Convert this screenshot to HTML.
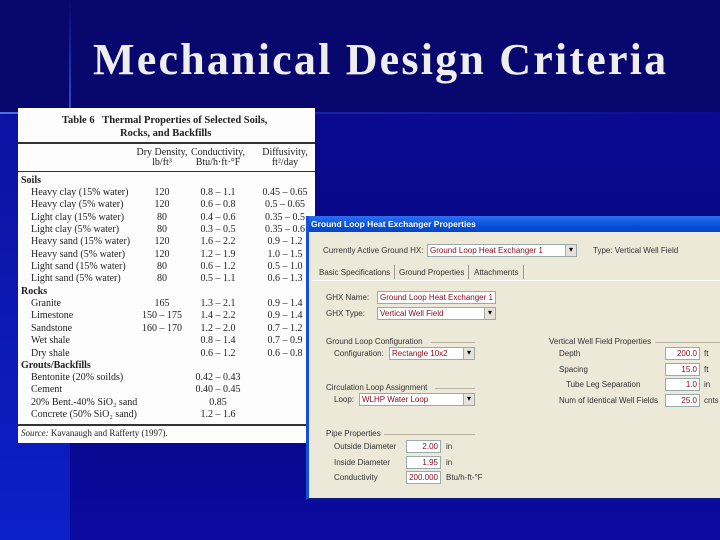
<!DOCTYPE html>
<html><head><meta charset="utf-8"><style>
*{margin:0;padding:0;box-sizing:border-box}
body{width:720px;height:540px;overflow:hidden;position:relative;background:#07076e;font-family:"Liberation Sans",sans-serif}
.a{position:absolute;white-space:nowrap}
#low{left:0;top:113px;width:720px;height:427px;background:linear-gradient(180deg,#0a0a92 0%,#06067e 50%,#0a0aa0 100%)}
#lstrip{left:0;top:113px;width:70px;height:427px;background:linear-gradient(180deg,#0c12a0,#0c20c8)}
#vl{left:69px;top:0;width:2px;height:113px;background:linear-gradient(180deg,#07076e,#3050d0)}
#hl{left:0;top:112px;width:720px;height:2px;background:linear-gradient(90deg,#5070e0,#1a2aa8 30%,#0c0c90)}
h1{position:absolute;left:93px;top:34px;font:700 44px "Liberation Serif",serif;color:#eeeeee;letter-spacing:2.2px}
#tbl{left:18px;top:108px;width:297px;height:335px;background:#fdfdfd;font-family:"Liberation Serif",serif;color:#222;font-size:10px}
#tbl .a{line-height:11px}
.c1{left:13px}.c2{width:60px;left:114px;text-align:center}.c3{width:80px;left:160px;text-align:center}.c4{width:60px;left:237px;text-align:center}
.rule{position:absolute;left:0;width:297px;height:1px;background:#333}
#win{left:306px;top:216px;width:414px;height:284px;background:#ece9d8;border-left:3px solid #1450d8;border-bottom:2px solid #0a1a80}
#tb{left:0;top:0;width:414px;height:16px;background:linear-gradient(180deg,#2a70f0,#0850d8 60%,#0844c0);color:#fff;font-weight:bold;font-size:8.5px;padding:3px 0 0 2px}
#win .t{font-size:8px;color:#333}
.in{position:absolute;background:#fff;border:1px solid #9aa;color:#8a1020;font-size:8px;padding:1px 2px;height:13px}
.cb:after{content:"▾";position:absolute;right:0;top:0;width:10px;height:11px;background:#e4e2da;border-left:1px solid #aaa;color:#000;font-size:8px;text-align:center}
.gl{position:absolute;height:1px;background:#b8b4a0}
.num{text-align:right}
</style></head><body>
<div class="a" id="low"></div><div class="a" id="lstrip"></div><div class="a" id="vl"></div><div class="a" id="hl"></div>
<h1>Mechanical Design Criteria</h1>
<div class="a" id="tbl">
<div class="a" style="left:44px;top:7px;font-weight:bold;font-size:10.5px">Table 6&nbsp;&nbsp; Thermal Properties of Selected Soils,</div>
<div class="a" style="left:102px;top:20px;font-weight:bold;font-size:10.5px">Rocks, and Backfills</div>
<div class="rule" style="top:34px;height:2px"></div>
<div class="a c2" style="top:39px">Dry Density,</div><div class="a c2" style="top:49px">lb/ft³</div>
<div class="a c3" style="top:39px">Conductivity,</div><div class="a c3" style="top:49px">Btu/h·ft·°F</div>
<div class="a c4" style="top:39px">Diffusivity,</div><div class="a c4" style="top:49px">ft²/day</div>
<div class="rule" style="top:63px"></div>
<div class="a" style="left:3px;top:67px;font-weight:bold">Soils</div>
<div class="a c1" style="top:79px">Heavy clay (15% water)</div><div class="a c2" style="top:79px">120</div><div class="a c3" style="top:79px">0.8 – 1.1</div><div class="a c4" style="top:79px">0.45 – 0.65</div>
<div class="a c1" style="top:91px">Heavy clay (5% water)</div><div class="a c2" style="top:91px">120</div><div class="a c3" style="top:91px">0.6 – 0.8</div><div class="a c4" style="top:91px">0.5 – 0.65</div>
<div class="a c1" style="top:104px">Light clay (15% water)</div><div class="a c2" style="top:104px">80</div><div class="a c3" style="top:104px">0.4 – 0.6</div><div class="a c4" style="top:104px">0.35 – 0.5</div>
<div class="a c1" style="top:116px">Light clay (5% water)</div><div class="a c2" style="top:116px">80</div><div class="a c3" style="top:116px">0.3 – 0.5</div><div class="a c4" style="top:116px">0.35 – 0.6</div>
<div class="a c1" style="top:128px">Heavy sand (15% water)</div><div class="a c2" style="top:128px">120</div><div class="a c3" style="top:128px">1.6 – 2.2</div><div class="a c4" style="top:128px">0.9 – 1.2</div>
<div class="a c1" style="top:141px">Heavy sand (5% water)</div><div class="a c2" style="top:141px">120</div><div class="a c3" style="top:141px">1.2 – 1.9</div><div class="a c4" style="top:141px">1.0 – 1.5</div>
<div class="a c1" style="top:153px">Light sand (15% water)</div><div class="a c2" style="top:153px">80</div><div class="a c3" style="top:153px">0.6 – 1.2</div><div class="a c4" style="top:153px">0.5 – 1.0</div>
<div class="a c1" style="top:165px">Light sand (5% water)</div><div class="a c2" style="top:165px">80</div><div class="a c3" style="top:165px">0.5 – 1.1</div><div class="a c4" style="top:165px">0.6 – 1.3</div>
<div class="a" style="left:3px;top:178px;font-weight:bold">Rocks</div>
<div class="a c1" style="top:190px">Granite</div><div class="a c2" style="top:190px">165</div><div class="a c3" style="top:190px">1.3 – 2.1</div><div class="a c4" style="top:190px">0.9 – 1.4</div>
<div class="a c1" style="top:202px">Limestone</div><div class="a c2" style="top:202px">150 – 175</div><div class="a c3" style="top:202px">1.4 – 2.2</div><div class="a c4" style="top:202px">0.9 – 1.4</div>
<div class="a c1" style="top:215px">Sandstone</div><div class="a c2" style="top:215px">160 – 170</div><div class="a c3" style="top:215px">1.2 – 2.0</div><div class="a c4" style="top:215px">0.7 – 1.2</div>
<div class="a c1" style="top:227px">Wet shale</div><div class="a c3" style="top:227px">0.8 – 1.4</div><div class="a c4" style="top:227px">0.7 – 0.9</div>
<div class="a c1" style="top:240px">Dry shale</div><div class="a c3" style="top:240px">0.6 – 1.2</div><div class="a c4" style="top:240px">0.6 – 0.8</div>
<div class="a" style="left:3px;top:252px;font-weight:bold">Grouts/Backfills</div>
<div class="a c1" style="top:264px">Bentonite (20% soilds)</div><div class="a c3" style="top:264px">0.42 – 0.43</div>
<div class="a c1" style="top:276px">Cement</div><div class="a c3" style="top:276px">0.40 – 0.45</div>
<div class="a c1" style="top:289px">20% Bent.-40% SiO₂ sand</div><div class="a c3" style="top:289px">0.85</div>
<div class="a c1" style="top:301px">Concrete (50% SiO₂ sand)</div><div class="a c3" style="top:301px">1.2 – 1.6</div>
<div class="rule" style="top:316px;height:2px"></div>
<div class="a" style="left:3px;top:320px;font-size:9px"><i>Source:</i> Kavanaugh and Rafferty (1997).</div>
</div>
<div class="a" id="win">
<div class="a" id="tb">Ground Loop Heat Exchanger Properties</div>
<div class="a t" style="left:14px;top:30px">Currently Active Ground HX:</div>
<div class="in cb" style="left:118px;top:28px;width:150px">Ground Loop Heat Exchanger 1</div>
<div class="a t" style="left:284px;top:30px">Type: Vertical Well Field</div>
<div class="a t" style="left:10px;top:52px">Basic Specifications</div>
<div class="a" style="left:85px;top:49px;width:1px;height:14px;background:#999"></div>
<div class="a t" style="left:90px;top:52px">Ground Properties</div>
<div class="a" style="left:159px;top:49px;width:1px;height:14px;background:#999"></div>
<div class="a t" style="left:165px;top:52px">Attachments</div>
<div class="a" style="left:214px;top:49px;width:1px;height:14px;background:#999"></div>
<div class="gl" style="left:3px;top:64px;width:411px;background:#fff"></div>
<div class="a t" style="left:17px;top:77px">GHX Name:</div>
<div class="in" style="left:68px;top:75px;width:119px">Ground Loop Heat Exchanger 1</div>
<div class="a t" style="left:17px;top:93px">GHX Type:</div>
<div class="in cb" style="left:68px;top:91px;width:119px">Vertical Well Field</div>
<div class="a t" style="left:17px;top:121px">Ground Loop Configuration</div><div class="gl" style="left:122px;top:126px;width:44px"></div>
<div class="a t" style="left:25px;top:133px">Configuration:</div>
<div class="in cb" style="left:80px;top:131px;width:86px">Rectangle 10x2</div>
<div class="a t" style="left:17px;top:167px">Circulation Loop Assignment</div><div class="gl" style="left:126px;top:172px;width:40px"></div>
<div class="a t" style="left:25px;top:179px">Loop:</div>
<div class="in cb" style="left:50px;top:177px;width:116px">WLHP Water Loop</div>
<div class="a t" style="left:17px;top:213px">Pipe Properties</div><div class="gl" style="left:75px;top:218px;width:91px"></div>
<div class="a t" style="left:25px;top:226px">Outside Diameter</div><div class="in num" style="left:97px;top:224px;width:35px">2.00</div><div class="a t" style="left:137px;top:226px">in</div>
<div class="a t" style="left:25px;top:242px">Inside Diameter</div><div class="in num" style="left:97px;top:240px;width:35px">1.95</div><div class="a t" style="left:137px;top:242px">in</div>
<div class="a t" style="left:25px;top:257px">Conductivity</div><div class="in num" style="left:97px;top:255px;width:35px">200.000</div><div class="a t" style="left:137px;top:257px">Btu/h-ft-°F</div>
<div class="a t" style="left:240px;top:121px">Vertical Well Field Properties</div><div class="gl" style="left:346px;top:126px;width:66px"></div>
<div class="a t" style="left:250px;top:133px">Depth</div><div class="in num" style="left:356px;top:131px;width:35px">200.0</div><div class="a t" style="left:395px;top:133px">ft</div>
<div class="a t" style="left:250px;top:149px">Spacing</div><div class="in num" style="left:356px;top:147px;width:35px">15.0</div><div class="a t" style="left:395px;top:149px">ft</div>
<div class="a t" style="left:257px;top:164px">Tube Leg Separation</div><div class="in num" style="left:356px;top:162px;width:35px">1.0</div><div class="a t" style="left:395px;top:164px">in</div>
<div class="a t" style="left:250px;top:180px">Num of Identical Well Fields</div><div class="in num" style="left:356px;top:178px;width:35px">25.0</div><div class="a t" style="left:395px;top:180px">cnts</div>
</div>
</body></html>
